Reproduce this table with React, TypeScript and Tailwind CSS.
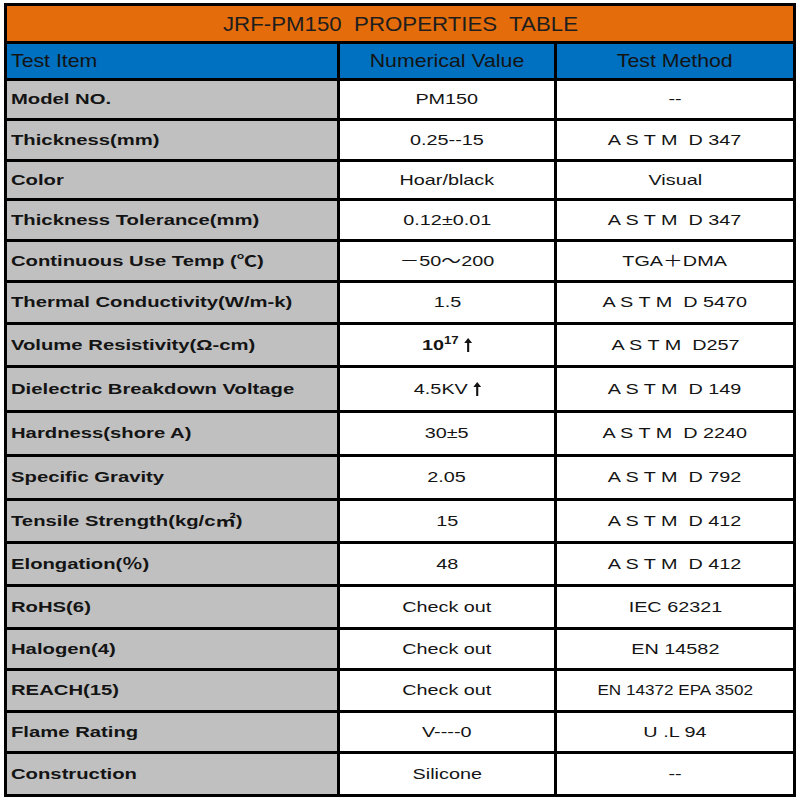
import React from "react";

type Row = { h: string; item: React.ReactNode; value: React.ReactNode; method: React.ReactNode; last?: boolean; small?: boolean };

const ASTM = (d: string) => `A S T M  D ${d}`;

const Arrow = () => (
  <svg width="6" height="14" viewBox="0 0 6 14" className="inline-block ml-[4px] align-[-2px]">
    <path d="M3 0 L6 5 L3.8 5 L3.8 14 L2.2 14 L2.2 5 L0 5 Z" fill="#141414" />
  </svg>
);

const rows: Row[] = [
  { h: "h-[40px]", item: "Model NO.", value: "PM150", method: "--" },
  { h: "h-[41px]", item: "Thickness(mm)", value: "0.25--15", method: ASTM("347") },
  { h: "h-[39px]", item: "Color", value: "Hoar/black", method: "Visual" },
  { h: "h-[41px]", item: "Thickness Tolerance(mm)", value: "0.12±0.01", method: ASTM("347") },
  { h: "h-[41px]", item: "Continuous Use Temp (℃)", value: "－50～200", method: "TGA＋DMA" },
  { h: "h-[42px]", item: "Thermal Conductivity(W/m-k)", value: "1.5", method: ASTM("5470") },
  {
    h: "h-[43px]",
    item: "Volume Resistivity(Ω-cm)",
    value: (
      <>
        <span className="font-bold">10</span>
        <sup className="font-bold text-[10px] relative -top-[6px]">17</sup>
        <Arrow />
      </>
    ),
    method: "A S T M  D257",
  },
  {
    h: "h-[45px]",
    item: "Dielectric Breakdown Voltage",
    value: (
      <>
        4.5KV
        <Arrow />
      </>
    ),
    method: ASTM("149"),
  },
  { h: "h-[44px]", item: "Hardness(shore A)", value: "30±5", method: ASTM("2240") },
  { h: "h-[44px]", item: "Specific Gravity", value: "2.05", method: ASTM("792") },
  { h: "h-[43px]", item: "Tensile Strength(kg/c㎡)", value: "15", method: ASTM("412") },
  { h: "h-[43px]", item: "Elongation(％)", value: "48", method: ASTM("412") },
  { h: "h-[43px]", item: "RoHS(6)", value: "Check out", method: "IEC 62321" },
  { h: "h-[41px]", item: "Halogen(4)", value: "Check out", method: "EN 14582" },
  { h: "h-[42px]", item: "REACH(15)", value: "Check out", method: "EN 14372 EPA 3502", small: true },
  { h: "h-[41px]", item: "Flame Rating", value: "V----0", method: "U .L 94" },
  { h: "h-[40px]", item: "Construction", value: "Silicone", method: "--", last: true },
];

const font = { fontFamily: '"Liberation Sans", Arial, "Noto Sans CJK SC", sans-serif' };

export default function App() {
  return (
    <div className="bg-white w-[800px] h-[800px] pt-[3px] pl-[4px] text-[#141414]" style={font}>
      <div className="w-[792px] border-[3px] border-black">
        <div className="h-[38px] border-b-[3px] border-black bg-[#e46c0a] flex items-center justify-center">
          <span className="inline-block text-[21px] whitespace-pre scale-x-[1.06] text-[#1e1e1e]">
            JRF-PM150  PROPERTIES  TABLE
          </span>
        </div>
        <div className="h-[37px] border-b-[3px] border-black bg-[#0070c0] grid grid-cols-[333px_217px_1fr] text-[19px]">
          <div className="border-r-[3px] border-black flex items-center pl-[4px]">
            <span className="inline-block origin-left scale-x-[1.12]">Test Item</span>
          </div>
          <div className="border-r-[3px] border-black flex items-center justify-center">
            <span className="inline-block scale-x-[1.12]">Numerical Value</span>
          </div>
          <div className="flex items-center justify-center">
            <span className="inline-block scale-x-[1.12]">Test Method</span>
          </div>
        </div>
        {rows.map((r, i) => (
          <div
            key={i}
            className={`${r.h} ${r.last ? "" : "border-b-[3px] border-black"} grid grid-cols-[333px_217px_1fr] text-[15px]`}
          >
            <div className="bg-[#c0c0c0] border-r-[3px] border-black flex items-center pl-[4px]">
              <span className="inline-block origin-left scale-x-[1.35] font-bold whitespace-pre">{r.item}</span>
            </div>
            <div className="border-r-[3px] border-black flex items-center justify-center">
              <span className="inline-block scale-x-[1.32] whitespace-pre">{r.value}</span>
            </div>
            <div className="flex items-center justify-center">
              <span className={`inline-block whitespace-pre ${r.small ? "scale-x-[1.14]" : "scale-x-[1.32]"}`}>
                {r.method}
              </span>
            </div>
          </div>
        ))}
      </div>
    </div>
  );
}
